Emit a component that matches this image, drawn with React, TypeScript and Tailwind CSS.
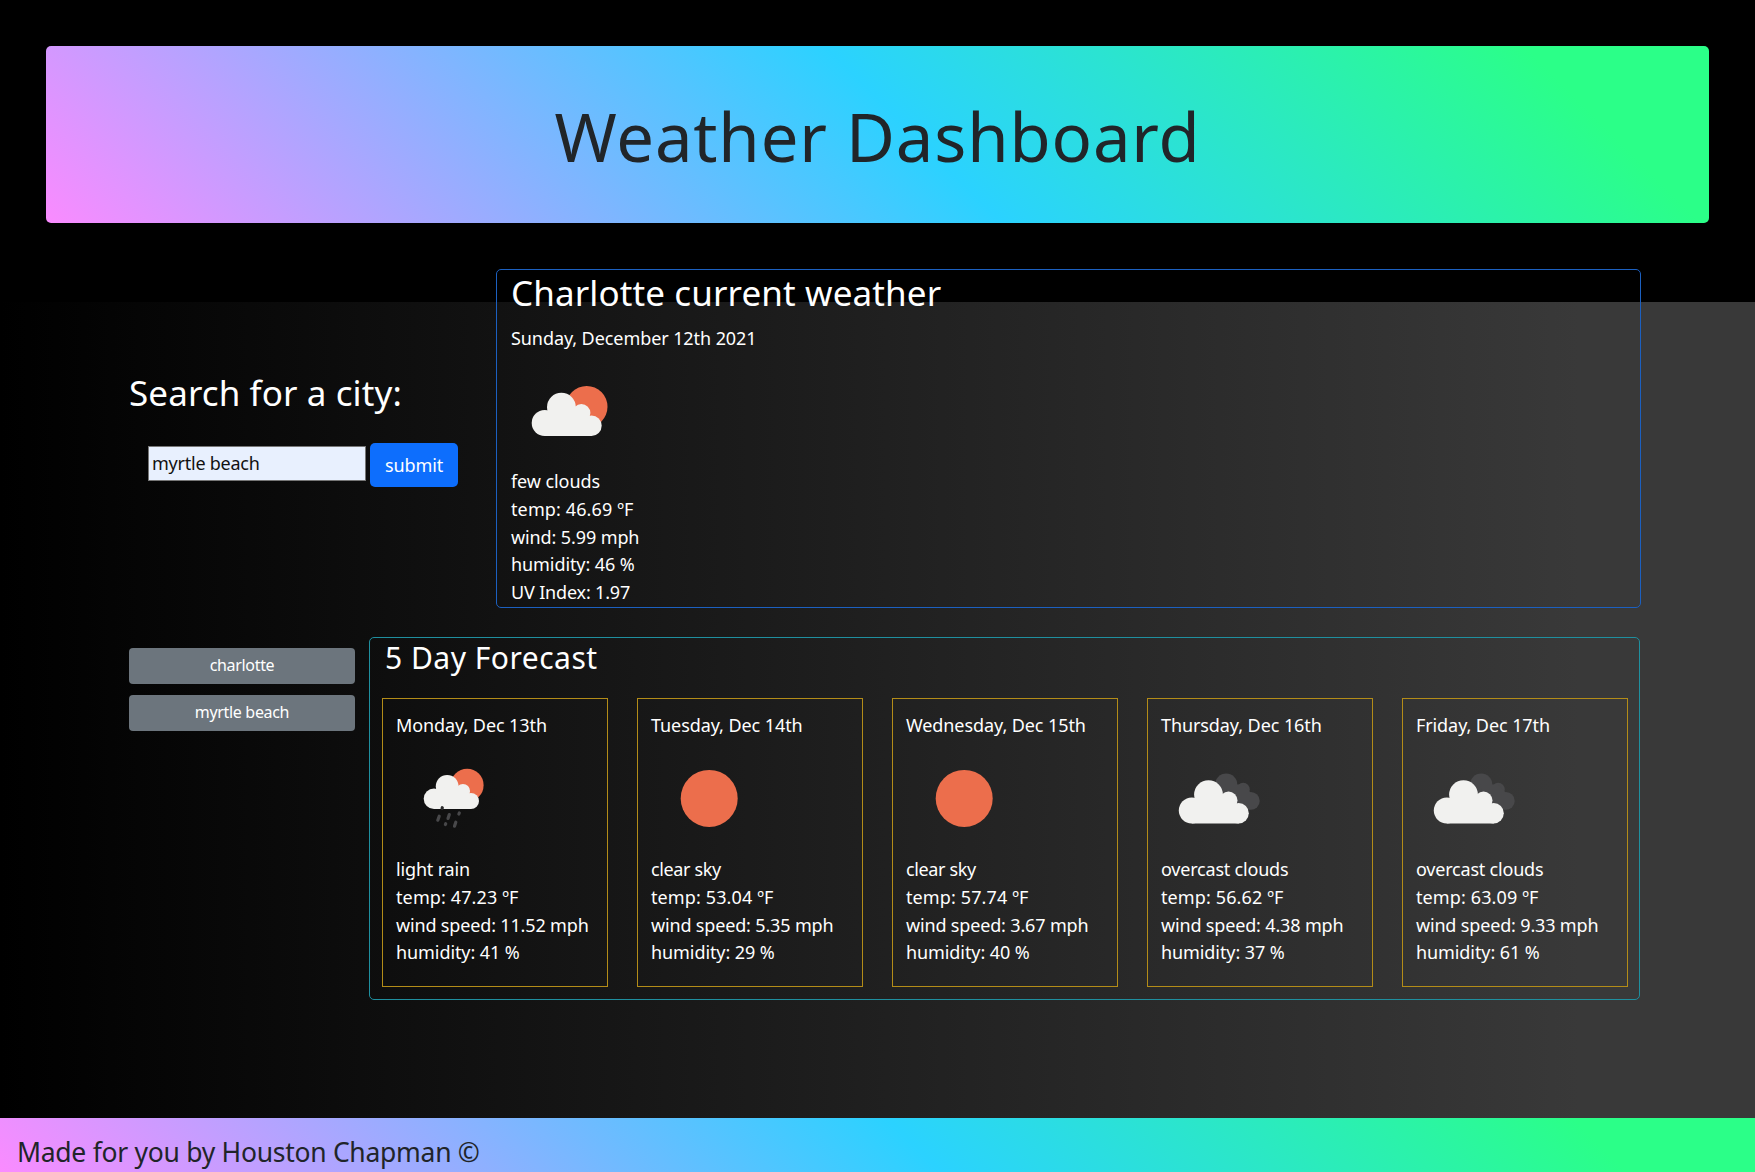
type Sky = 'few' | 'rain' | 'clear' | 'overcast';

function Cloud() {
  return (
    <g fill="#f1f1ef">
      <circle cx="33" cy="70.3" r="13" />
      <circle cx="49.7" cy="54.4" r="14.4" />
      <circle cx="69.7" cy="60.4" r="9" />
      <circle cx="79.8" cy="73.1" r="10.2" />
      <path d="M33 83.3V62l16-8 15 2 8 3 6 6 2 18.3z" />
    </g>
  );
}

function WeatherIcon({ sky }: { sky: Sky }) {
  return (
    <svg className="block h-[116px] w-[116px]" viewBox="0 0 116 116">
      {sky === 'clear' && <circle cx="58.2" cy="58.4" r="28.5" fill="#ec6e4c" />}
      {sky === 'few' && (
        <g transform="translate(.7 .7)">
          <circle cx="75" cy="54" r="20.8" fill="#ec6e4c" />
          <Cloud />
        </g>
      )}
      {sky === 'rain' && (
        <g transform="translate(.2 .8)">
          <g transform="translate(11.7 2.5) scale(.79)">
            <circle cx="75" cy="53" r="20.8" fill="#ec6e4c" />
            <Cloud />
          </g>
          <g stroke="#48484a" strokeWidth="3.2" strokeLinecap="round">
            <path d="M43 75.4l-1.4 4M53.1 73.8l-1.3 3.8M63.1 72.2l-.4 1M49.5 82.9l-.3.9M59.6 81.4l-1.3 4" />
            <path d="M46.1 66.9l-.2.7" stroke="#2b2b2c" />
          </g>
        </g>
      )}
      {sky === 'overcast' && (
        <g transform="translate(.4 .6)">
          <g fill="#48484a">
            <circle cx="64.8" cy="44" r="11.1" />
            <circle cx="81.8" cy="48.8" r="6.6" />
            <circle cx="89.4" cy="60.3" r="8.9" />
            <path d="M64 44h18l7 8v17H70z" />
          </g>
          <g transform="translate(-2.6 -.4)">
            <Cloud />
          </g>
        </g>
      )}
    </svg>
  );
}

const days: { date: string; sky: Sky; label: string; tracking: string; temp: string; wind: string; humidity: string }[] = [
  { date: 'Monday, Dec 13th', sky: 'rain', label: 'light rain', tracking: 'tracking-[-0.16px]', temp: '47.23', wind: '11.52', humidity: '41' },
  { date: 'Tuesday, Dec 14th', sky: 'clear', label: 'clear sky', tracking: 'tracking-[-0.35px]', temp: '53.04', wind: '5.35', humidity: '29' },
  { date: 'Wednesday, Dec 15th', sky: 'clear', label: 'clear sky', tracking: 'tracking-[-0.35px]', temp: '57.74', wind: '3.67', humidity: '40' },
  { date: 'Thursday, Dec 16th', sky: 'overcast', label: 'overcast clouds', tracking: 'tracking-[-0.2px]', temp: '56.62', wind: '4.38', humidity: '37' },
  { date: 'Friday, Dec 17th', sky: 'overcast', label: 'overcast clouds', tracking: 'tracking-[-0.2px]', temp: '63.09', wind: '9.33', humidity: '61' },
];

export default function App() {
  return (
    <div className="flex h-[1172px] w-[1755px] flex-col overflow-hidden whitespace-nowrap bg-black bg-[linear-gradient(90deg,#000_0%,#393939_90%)] bg-[position:0_302px] bg-no-repeat font-['Noto_Sans',sans-serif] text-[18px] leading-[27.84px] tracking-[-0.08px] text-white">
      <header className="mx-[46px] mt-[46px] flex h-[177px] shrink-0 items-center justify-center rounded-[5px] bg-[linear-gradient(45deg,#FA8BFF_0%,#2BD2FF_52%,#2BFF88_90%)] pt-[2px]">
        <h1 className="text-[67px] leading-[78px] tracking-[0.85px] text-[#212529]">Weather Dashboard</h1>
      </header>

      <div className="mt-[46px] flex pl-[129px]">
        <section className="w-[367px]">
          <h2 className="mt-[102px] text-[35px] leading-[44px] tracking-[0.1px]">Search for a city:</h2>
          <form className="ml-[19px] mt-[28px] flex">
            <input
              className="mt-[3px] h-[35px] w-[218px] border border-[#767676] bg-[#e8f0fe] px-[3px] pb-[2px] tracking-[-0.24px] text-[#111] outline-none"
              defaultValue="myrtle beach"
            />
            <button type="button" className="ml-[4px] h-[44px] w-[88px] rounded-[5px] bg-[#0d6efd] pt-px tracking-[-0.1px]">
              submit
            </button>
          </form>
        </section>

        <section className="h-[339px] w-[1144.5px] rounded-[5px] border border-[#1c60c0] pl-[14px] pt-px">
          <h2 className="text-[35px] leading-[44px] tracking-[0.12px]">Charlotte current weather</h2>
          <p className="mt-[10px]">Sunday, December 12th 2021</p>
          <div className="-mt-px">
            <WeatherIcon sky="few" />
          </div>
          <p>few clouds</p>
          <p className="tracking-[0.12px]">temp: 46.69 ºF</p>
          <p className="tracking-[-0.11px]">wind: 5.99 mph</p>
          <p>humidity: 46 %</p>
          <p className="tracking-[-0.17px]">UV Index: 1.97</p>
        </section>
      </div>

      <div className="mt-[29px] flex pl-[129px]">
        <div className="mr-[14px] mt-[11px] flex w-[226px] flex-col gap-[11px] text-[16px] tracking-[-0.33px]">
          <button className="h-[36px] rounded-[4px] bg-[#6c757d]">charlotte</button>
          <button className="h-[36px] rounded-[4px] bg-[#6c757d]">myrtle beach</button>
        </div>

        <section className="h-[362.5px] w-[1270.5px] rounded-[5px] border border-[#1f8f9f] pl-[12px]">
          <h3 className="pl-[3px] text-[30px] leading-[39px] tracking-[0.5px]">5 Day Forecast</h3>
          <div className="mt-[21px] flex gap-[29.4px]">
            {days.map((day) => (
              <article key={day.date} className="h-[289px] w-[225.6px] shrink-0 border border-[#b38c18] pl-[13px] pt-[13px]">
                <p>{day.date}</p>
                <WeatherIcon sky={day.sky} />
                <p className={day.tracking}>{day.label}</p>
                <p className="tracking-[0.12px]">temp: {day.temp} ºF</p>
                <p className="tracking-[-0.16px]">wind speed: {day.wind} mph</p>
                <p>humidity: {day.humidity} %</p>
              </article>
            ))}
          </div>
        </section>
      </div>

      <footer className="mt-auto h-[54.5px] shrink-0 bg-[linear-gradient(45deg,#FA8BFF_0%,#2BD2FF_52%,#2BFF88_90%)] pl-[17px] pt-[14px] text-[26.5px] leading-[40px] tracking-[-0.28px] text-[#212529]">
        Made for you by Houston Chapman ©
      </footer>
    </div>
  );
}
